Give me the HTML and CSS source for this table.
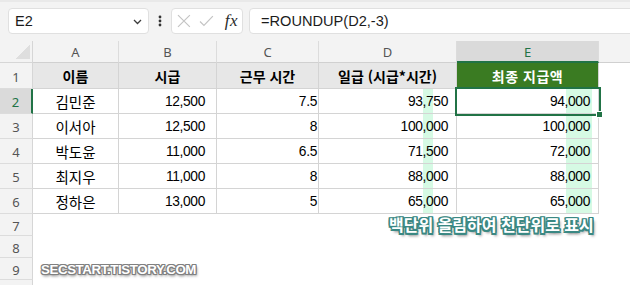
FILE: index.html
```html
<!DOCTYPE html>
<html lang="ko">
<head>
<meta charset="utf-8">
<title>ROUNDUP</title>
<link rel="stylesheet" href="styles.css">
</head>
<body>
<div class="toolbar">
  <div class="namebox">
    <span class="nametext">E2</span>
    <svg class="chev" width="9" height="6" viewBox="0 0 9 6"><path d="M1 1 L4.5 4.5 L8 1" fill="none" stroke="#3c3c3c" stroke-width="1.3"/></svg>
  </div>
  <div class="kebab">
    <svg width="4" height="12" viewBox="0 0 4 12"><circle cx="2" cy="2" r="1.4" fill="#333"/><circle cx="2" cy="6" r="1.4" fill="#333"/><circle cx="2" cy="10" r="1.4" fill="#333"/></svg>
  </div>
  <div class="fxbtns">
    <svg width="14" height="14" viewBox="0 0 14 14"><path d="M1 1 L13 13 M13 1 L1 13" stroke="#c4c4c4" stroke-width="1.2" fill="none"/></svg>
    <svg width="15" height="12" viewBox="0 0 15 12"><path d="M1 6.5 L5 10.5 L14 1" stroke="#c4c4c4" stroke-width="1.2" fill="none"/></svg>
    <span class="fx">fx</span>
  </div>
  <div class="formula">=ROUNDUP(D2,-3)</div>
</div>

<div class="sheet">
  <div class="corner"><span class="tri"></span></div>
  <div class="ch">A</div><div class="ch">B</div><div class="ch">C</div><div class="ch">D</div><div class="ch ch-sel">E</div><div class="ch ch-last"></div>

  <div class="rh">1</div>
  <div class="c hd">이름</div><div class="c hd">시급</div><div class="c hd">근무 시간</div><div class="c hd">일급 (시급*시간)</div><div class="c hd hd-green">최종 지급액</div><div class="e"></div>

  <div class="rh rh-sel">2</div>
  <div class="c name">김민준</div><div class="c num nb">12,500</div><div class="c num nc">7.5</div><div class="c num nd hl-d">93,750</div><div class="c num ne hl-e sel">94,000</div><div class="e"></div>

  <div class="rh">3</div>
  <div class="c name">이서아</div><div class="c num nb">12,500</div><div class="c num nc">8</div><div class="c num nd hl-d">100,000</div><div class="c num ne hl-e">100,000</div><div class="e"></div>

  <div class="rh">4</div>
  <div class="c name">박도윤</div><div class="c num nb">11,000</div><div class="c num nc">6.5</div><div class="c num nd hl-d">71,500</div><div class="c num ne hl-e">72,000</div><div class="e"></div>

  <div class="rh">5</div>
  <div class="c name">최지우</div><div class="c num nb">11,000</div><div class="c num nc">8</div><div class="c num nd hl-d">88,000</div><div class="c num ne hl-e">88,000</div><div class="e"></div>

  <div class="rh">6</div>
  <div class="c name">정하은</div><div class="c num nb">13,000</div><div class="c num nc">5</div><div class="c num nd hl-d">65,000</div><div class="c num ne hl-e">65,000</div><div class="e"></div>

  <div class="rh">7</div><div class="e"></div><div class="e"></div><div class="e"></div><div class="e"></div><div class="e"></div><div class="e"></div>
  <div class="rh">8</div><div class="e"></div><div class="e"></div><div class="e"></div><div class="e"></div><div class="e"></div><div class="e"></div>
  <div class="rh">9</div><div class="e"></div><div class="e"></div><div class="e"></div><div class="e"></div><div class="e"></div><div class="e"></div>
  <div class="rh rh-end"></div><div class="e"></div><div class="e"></div><div class="e"></div><div class="e"></div><div class="e"></div><div class="e"></div>
</div>

<div class="note">백단위 올림하여 천단위로 표시</div>
<div class="watermark">SECSTART.TISTORY.COM</div>
</body>
</html>
```

FILE: styles.css
```css
html, body {
  margin: 0;
  padding: 0;
  width: 630px;
  height: 285px;
  overflow: hidden;
  background: #ffffff;
}
body {
  position: relative;
  font-family: "Noto Sans CJK KR", "Noto Sans", sans-serif;
}

/* ---------- toolbar ---------- */
.toolbar {
  height: 41px;
  box-sizing: border-box;
  background: #f3f3f3;
  border-top: 2px solid #e9e9e9;
  padding: 6px 0 0 8px;
  display: flex;
  align-items: flex-start;
}
.namebox {
  width: 141px;
  height: 26px;
  box-sizing: border-box;
  background: #fff;
  border: 1px solid #e0e0e0;
  border-radius: 4px;
  display: flex;
  align-items: center;
  justify-content: space-between;
  padding: 0 6px 0 6px;
}
.nametext {
  font-family: "Liberation Sans", sans-serif;
  font-size: 14.5px;
  color: #1b1b1b;
}
.chev { margin-top: 1px; }
.kebab {
  width: 22px;
  height: 26px;
  display: flex;
  align-items: center;
  justify-content: center;
}
.fxbtns {
  width: 72px;
  height: 26px;
  box-sizing: border-box;
  background: #fff;
  border: 1px solid #e0e0e0;
  border-radius: 4px;
  display: flex;
  align-items: center;
  padding: 0 4px 0 5px;
  gap: 8px;
}
.fx {
  font-family: "Liberation Serif", serif;
  font-style: italic;
  font-size: 17px;
  color: #2a2a2a;
  margin-left: 3px;
  letter-spacing: 0.5px;
}
.formula {
  flex: 1;
  margin-left: 6px;
  margin-right: -10px;
  height: 26px;
  box-sizing: border-box;
  background: #fff;
  border: 1px solid #e0e0e0;
  border-radius: 4px;
  padding-left: 11px;
  font-family: "Liberation Sans", sans-serif;
  font-size: 14.6px;
  line-height: 24px;
  color: #1b1b1b;
}

/* ---------- sheet grid ---------- */
.sheet {
  display: grid;
  grid-template-columns: 33px 86px 98px 102px 138px 142px 1fr;
  grid-template-rows: 22px 26px repeat(5, 25px) repeat(3, 22px) 1fr;
  height: 244px;
  overflow: hidden;
}
.sheet > div { box-sizing: border-box; min-height: 0; }

.corner {
  background: #f3f3f3;
  border-right: 1px solid #d6d6d6;
  border-bottom: 1px solid #d6d6d6;
  position: relative;
}
.tri {
  position: absolute;
  right: 2px;
  bottom: 3px;
  width: 15px;
  height: 14px;
  background: linear-gradient(to bottom right, transparent 50%, #dedede 50%);
}
.ch {
  background: #f3f3f3;
  border-right: 1px solid #dcdcdc;
  border-bottom: 1px solid #d0d0d0;
  font-family: "Noto Sans", sans-serif;
  font-size: 13px;
  color: #555;
  display: flex;
  align-items: center;
  justify-content: center;
  padding-top: 1px;
}
.ch-sel {
  background: #dadada;
  color: #217346;
  border-bottom: 2px solid #217346;
}
.ch-last { border-right: none; }

.rh {
  background: #f3f3f3;
  border-right: 1px solid #d6d6d6;
  border-bottom: 1px solid #dcdcdc;
  font-family: "Noto Sans", sans-serif;
  font-size: 13px;
  color: #555;
  display: flex;
  align-items: center;
  justify-content: center;
  padding-top: 2px;
}
.rh-sel {
  background: #dadada;
  color: #217346;
  border-right: 2px solid #217346;
}
.rh-end { border-bottom: none; }

.c {
  border-right: 1px solid #d4d4d4;
  border-bottom: 1px solid #d4d4d4;
  display: flex;
  align-items: center;
  font-size: 14px;
  color: #000;
  white-space: nowrap;
}
.hd {
  background: #e7e7e7;
  font-weight: 700;
  justify-content: center;
  font-size: 14px;
  padding-top: 1px;
}
.hd-green {
  background: #3a7b22;
  color: #fff;
  letter-spacing: 0.5px;
}
.name {
  justify-content: center;
  font-size: 14.5px;
  padding-top: 1px;
}
.num {
  justify-content: flex-end;
  font-family: "Liberation Sans", sans-serif;
  font-size: 13.8px;
  letter-spacing: -0.35px;
  padding-top: 1px;
}
.nb { padding-right: 11px; }
.nc { padding-right: 1px; }
.nd { padding-right: 8px; }
.ne { padding-right: 8px; }

.hl-d {
  background: linear-gradient(90deg, transparent 104px, #d6fae4 104px, #d6fae4 114px, transparent 114px);
}
.hl-e {
  background: linear-gradient(90deg, transparent 109px, #d6fae4 109px, #d6fae4 135px, transparent 135px);
}

.sel {
  position: relative;
  outline: 2px solid #217346;
  outline-offset: 0;
  z-index: 2;
}
.sel::after {
  content: "";
  position: absolute;
  right: -5px;
  bottom: -5px;
  width: 5px;
  height: 5px;
  background: #217346;
  border: 1px solid #fff;
}

.e { background: #fff; }

/* ---------- overlays ---------- */
.note {
  position: absolute;
  left: 389px;
  top: 214px;
  font-family: "Noto Sans CJK KR", sans-serif;
  font-weight: 700;
  font-size: 16px;
  line-height: 20px;
  color: #fff;
  white-space: nowrap;
  text-shadow:
    -1.5px -1.5px 0 #3a8883, 1.5px -1.5px 0 #3a8883,
    -1.5px 1.5px 0 #3a8883, 1.5px 1.5px 0 #3a8883,
    0 -1.5px 0 #3a8883, 0 1.5px 0 #3a8883,
    -1.5px 0 0 #3a8883, 1.5px 0 0 #3a8883,
    2px 3px 3px rgba(0, 0, 0, 0.55);
}
.watermark {
  position: absolute;
  left: 41px;
  top: 262px;
  font-family: "Liberation Sans", sans-serif;
  font-weight: 700;
  font-size: 13.3px;
  line-height: 16px;
  letter-spacing: -0.4px;
  color: #fff;
  white-space: nowrap;
  text-shadow:
    -1px -1px 0 #808080, 1px -1px 0 #808080,
    -1px 1px 0 #808080, 1px 1px 0 #808080,
    0 -1px 0 #808080, 0 1px 0 #808080,
    -1px 0 0 #808080, 1px 0 0 #808080,
    1px 2px 3px rgba(0, 0, 0, 0.6);
}
```
